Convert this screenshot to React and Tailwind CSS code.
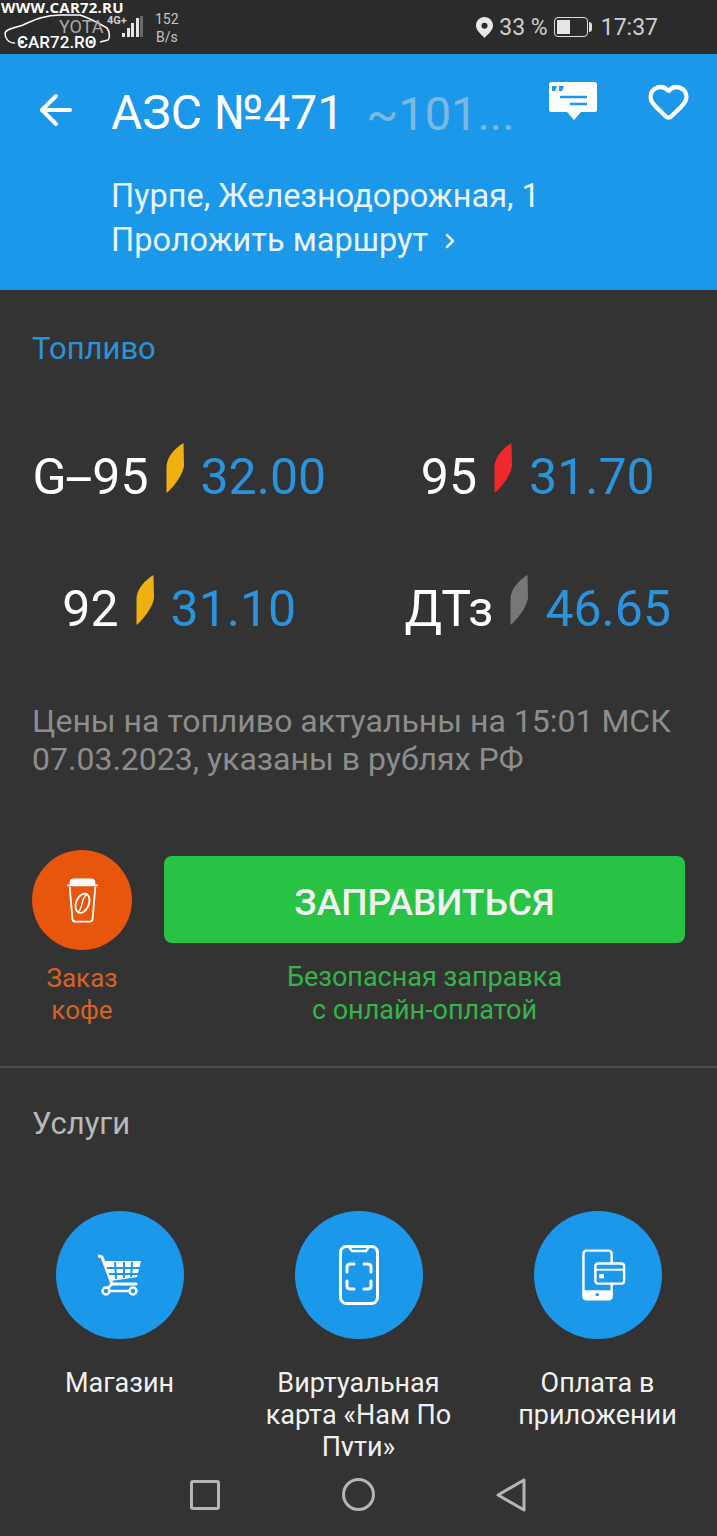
import { ArrowLeft, ChevronRight, Heart } from 'lucide-react';

const PRICES = [
  { name: 'G-95', price: '32.00', leaf: '#f0b110' },
  { name: '95', price: '31.70', leaf: '#f02a2c' },
  { name: '92', price: '31.10', leaf: '#f0b110' },
  { name: 'ДТз', price: '46.65', leaf: '#777777' },
];

function Leaf({ color }) {
  return (
    <svg width="18" height="50" viewBox="0 0 18 50" className="mb-[18px] shrink-0">
      <path d="M17.500 0L18 22C18 30 8 44 0.500 50L0.500 23C1 14 9 5 17.500 0Z" fill={color} />
    </svg>
  );
}

function Fuel({ name, price, leaf }) {
  const parts = name.split('-');
  return (
    <div className="flex items-center justify-center h-[52px]">
      <span className="text-[50px] leading-none text-white whitespace-nowrap">
        {parts.length > 1 ? (
          <>{parts[0]}<span className="inline-block scale-x-[2] mx-[6px]">-</span>{parts[1]}</>
        ) : name}
      </span>
      <span className="mx-[17px] flex"><Leaf color={leaf} /></span>
      <span className="text-[50px] leading-none text-[#2a93dc]">{price}</span>
    </div>
  );
}

function CoffeeIcon() {
  return (
    <svg width="33" height="49" viewBox="0 0 36 50" fill="none" stroke="#fff">
      <path d="M4 5C4 2 6 1 9 1H27C30 1 32 2 32 5V8H4Z" fill="#fff" stroke="none" />
      <path d="M1 8.500H35" strokeWidth="2" />
      <path d="M4 10L7 45C7 47 8 48 10 48H26C28 48 29 47 29 45L32 10" strokeWidth="2" />
      <ellipse cx="18" cy="28" rx="7" ry="11" transform="rotate(22 18 28)" strokeWidth="2" />
      <path d="M23 18C15 24 20 31 13 38" strokeWidth="1.500" />
    </svg>
  );
}

function CartIcon() {
  return (
    <svg width="44" height="42" viewBox="0 0 44 42" fill="none" stroke="#fff">
      <path d="M1 2L4 3L14 30H38" strokeWidth="3" strokeLinecap="round" strokeLinejoin="round" />
      <path d="M7 7H43L39 23L13 27Z" fill="#fff" stroke="none" />
      <path d="M17 8L18 25M26 8V24M34 8L33 23M9 14H42M11 20H40" stroke="#1c98ea" strokeWidth="2" />
      <path d="M14 30L8 36M8 37H33" strokeWidth="2.500" />
      <circle cx="8" cy="37" r="3.500" fill="#1c98ea" strokeWidth="2.500" />
      <circle cx="35" cy="37" r="3.500" fill="#1c98ea" strokeWidth="2.500" />
    </svg>
  );
}

function CardPhoneIcon() {
  return (
    <svg width="40" height="60" viewBox="0 0 40 60" fill="none" stroke="#fff" strokeWidth="3">
      <rect x="1.500" y="1.500" width="37" height="57" rx="6" />
      <path d="M10 2L13 6H27L30 2" strokeWidth="2.500" />
      <path d="M8 27V22C8 20 9.500 19 11.500 19H15M25 19H28.500C30.500 19 32 20 32 22V27M32 36V41C32 43 30.500 44 28.500 44H25M15 44H11.500C9.500 44 8 43 8 41V36" strokeLinecap="round" />
    </svg>
  );
}

function PayIcon() {
  return (
    <svg width="44" height="52" viewBox="0 0 46 54" fill="none" stroke="#fff" strokeWidth="2.500" className="ml-[12px]">
      <path d="M31 14V5C31 3 29.500 1.500 27.500 1.500H5C3 1.500 1.500 3 1.500 5V49C1.500 51 3 52.500 5 52.500H27.500C29.500 52.500 31 51 31 49V36" />
      <path d="M2 43H31V49C31 51 29.500 52.500 27.500 52.500H5C3 52.500 2 51 2 49Z" fill="#fff" stroke="none" />
      <circle cx="16" cy="47.500" r="1.800" fill="#1c98ea" stroke="none" />
      <rect x="14" y="15" width="30" height="21" rx="3" fill="#1c98ea" />
      <path d="M14 21.500H44" strokeWidth="2" />
      <rect x="18" y="26" width="5" height="4.500" fill="#fff" stroke="none" />
    </svg>
  );
}

function Service({ icon, children }) {
  return (
    <div className="flex flex-col items-center w-[239px] shrink-0">
      <div className="w-[128px] h-[128px] rounded-full bg-[#1c98ea] flex items-center justify-center">
        {icon}
      </div>
      <p className="mt-[28px] w-[200px] text-center text-[27px] leading-[32px] text-[#f1f1f1]">{children}</p>
    </div>
  );
}

function StatusBar() {
  return (
    <div className="relative h-[54px] shrink-0 bg-[#2b2b2b] flex items-center text-[#cfcfcf]">
      {/* watermark over the bar */}
      <span className="absolute left-[1px] top-0 text-[15px] leading-[15px] font-bold tracking-[0.2px] text-white font-['Open_Sans',sans-serif]">WWW.CAR72.RU</span>
      <svg width="112" height="40" viewBox="0 0 112 40" fill="none" stroke="#fff" strokeWidth="1.500" className="absolute left-0 top-[10px]">
        <path d="M15 33C8 33 5 28 5 23C6 19 14 18 23 15C32 11 44 5 60 5H80C92 9 100 14 107 18C110 22 110 28 108 30L100 32" />
        <circle cx="22" cy="32" r="2" fill="#fff" stroke="none" />
        <circle cx="91" cy="32" r="2" fill="#fff" stroke="none" />
      </svg>
      <span className="absolute left-[59px] top-[19px] text-[18px] leading-[15px] text-[#a9a9a9]">YOTA</span>
      <span className="absolute left-[17px] top-[34px] text-[17px] leading-[16px] font-medium text-white">CAR72.RO</span>
      <span className="absolute left-[107px] top-[15px] text-[11px] leading-[11px] font-bold text-[#cfcfcf]">4G+</span>
      <div className="absolute left-[122px] top-[16px] flex items-end gap-[1.500px] h-[21px]">
        <span className="w-[3px] h-[4px] bg-[#e5e5e5]" />
        <span className="w-[3px] h-[9px] bg-[#e5e5e5]" />
        <span className="w-[3px] h-[14px] bg-[#e5e5e5]" />
        <span className="w-[3px] h-[19px] bg-[#e5e5e5]" />
        <span className="w-[3px] h-[21px] bg-[#6a6a6a]" />
      </div>
      <div className="absolute left-[155px] top-[10px] text-[14px] leading-[18px] text-center text-[#c4c4c4]">152<br />B/s</div>
      <div className="ml-auto mr-[59px] flex items-center">
        <svg width="17" height="21" viewBox="0 0 18 22" className="mr-[6px]">
          <path fillRule="evenodd" d="M9 0C4 0 0 4 0 9C0 14 5 18 9 22C13 18 18 14 18 9C18 4 14 0 9 0ZM9 6A3.200 3.200 0 1 1 9 12.400A3.200 3.200 0 1 1 9 6Z" fill="#e8e8e8" />
        </svg>
        <span className="text-[23px] leading-none">33 %</span>
        <div className="ml-[6px] mr-[1px] w-[34px] h-[20px] rounded-[4px] border-[1.500px] border-[#dedede] p-[2px]">
          <div className="w-[13px] h-full bg-[#e5e5e5]" />
        </div>
        <span className="w-[3px] h-[10px] rounded-r-sm bg-[#dedede] mr-[9px]" />
        <span className="text-[23px] leading-none">17:37</span>
      </div>
    </div>
  );
}

export default function App() {
  return (
    <div className="w-[717px] h-[1536px] overflow-hidden flex flex-col bg-[#333333] font-['Roboto',sans-serif]">
      <StatusBar />

      {/* header */}
      <div className="h-[236px] shrink-0 bg-[#1c98ea] pl-[32px] flex text-white">
        <ArrowLeft size={48} strokeWidth={2} className="mt-[32px] shrink-0" />
        <div className="ml-[31px] w-[438px] shrink-0">
          <div className="mt-[29px] flex items-center h-[60px] whitespace-nowrap">
            <span className="text-[48px] leading-none">АЗС №471</span>
            <span className="ml-[22px] text-[47px] leading-none text-[#7cb9e0]">~101...</span>
          </div>
          <p className="mt-[31px] text-[32.500px] leading-[44px] text-[#e9f4fc] whitespace-nowrap">Пурпе, Железнодорожная, 1</p>
          <div className="flex items-center text-[32.500px] leading-[44px] text-[#e9f4fc] whitespace-nowrap">
            Проложить маршрут
            <ChevronRight size={24} strokeWidth={2.500} className="ml-[10px] mt-[2px]" />
          </div>
        </div>
        <svg width="48" height="38" viewBox="0 0 48 38" className="mt-[28px] shrink-0">
          <path d="M2 0H46C47 0 48 1 48 2V28C48 29 47 30 46 30H32L25 38L18 30H2C1 30 0 29 0 28V2C0 1 1 0 2 0Z" fill="#fff" />
          <path d="M11 15H38M21 22H38" stroke="#1c98ea" strokeWidth="2.500" />
          <path d="M3 4H8L6 9H3ZM10 4H15L13 9H10Z" fill="#1c98ea" />
        </svg>
        <Heart size={43} strokeWidth={2.400} className="ml-[50px] mt-[26px] shrink-0" />
      </div>

      {/* content */}
      <div className="flex-1 min-h-0 overflow-hidden">
        <div className="px-[32px] pt-[39px] text-[31px] leading-[40px] text-[#2a93dc]">Топливо</div>

        <div className="mt-[82px] grid grid-cols-2 gap-y-[80px]">
          {PRICES.map(f => <Fuel key={f.name} {...f} />)}
        </div>

        <p className="mt-[67px] px-[32px] text-[32px] leading-[38px] text-[#8d8d8d]">
          Цены на топливо актуальны на 15:01 МСК 07.03.2023, указаны в рублях РФ
        </p>

        <div className="mt-[72px] px-[32px] flex">
          <div className="w-[100px] shrink-0 flex flex-col items-center">
            <div className="w-[100px] h-[100px] rounded-full bg-[#e8550c] flex items-center justify-center">
              <CoffeeIcon />
            </div>
            <p className="mt-[12px] text-center text-[26px] leading-[32px] text-[#d4622a]">Заказ<br />кофе</p>
          </div>
          <div className="ml-[32px] flex-1 flex flex-col items-center">
            <div className="mt-[6px] w-full h-[87px] rounded-[8px] bg-[#28c244] flex items-center justify-center pt-[6px] text-[37px] font-medium text-[#f2f2f2]">
              ЗАПРАВИТЬСЯ
            </div>
            <p className="mt-[18px] text-center text-[27px] leading-[33px] text-[#36b44a]">Безопасная заправка<br />с онлайн-оплатой</p>
          </div>
        </div>

        <div className="mt-[39px] h-[2px] bg-[#4c4c4c]" />

        <div className="px-[32px] pt-[36px] text-[31px] leading-[40px] text-[#b9b9b9]">Услуги</div>

        <div className="mt-[67px] flex">
          <Service icon={<CartIcon />}>Магазин</Service>
          <Service icon={<CardPhoneIcon />}>Виртуальная карта «Нам По Пути»</Service>
          <Service icon={<PayIcon />}>Оплата в приложении</Service>
        </div>
      </div>

      {/* system nav */}
      <div className="h-[80px] shrink-0 bg-[#333333] flex items-start">
        <div className="ml-[190px] mt-[24px] w-[30px] h-[30px] rounded-[3px] border-[3px] border-[#b5b5b5]" />
        <div className="ml-[122px] mt-[22px] w-[33px] h-[33px] rounded-full border-[3px] border-[#b5b5b5]" />
        <svg width="30" height="34" viewBox="0 0 30 34" fill="none" className="ml-[121px] mt-[22px]">
          <path d="M2 17L28 2V32Z" stroke="#b5b5b5" strokeWidth="3" strokeLinejoin="round" />
        </svg>
      </div>
    </div>
  );
}
